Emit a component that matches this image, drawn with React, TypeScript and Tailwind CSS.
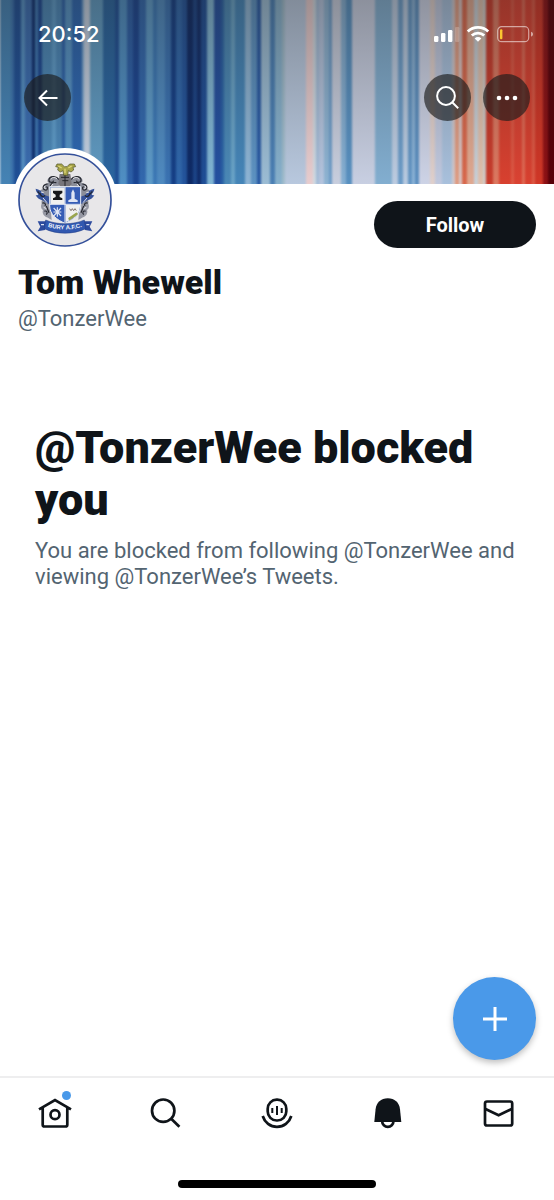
import React from "react";

// [left edge, colour], each stripe runs up to the next one
const STRIPES: [number, string][] = [
  [0, "#4583b5"], [11, "#3a72ae"], [14, "#1f4f96"], [21, "#5590c4"], [25, "#3a6cb0"], [32, "#0c2c6c"],
  [35, "#3f7ab5"], [38, "#1b4690"], [42, "#4a86b6"], [52, "#5e9bc8"], [56, "#4a86b8"], [62, "#2a5fa8"],
  [65, "#5592c4"], [72, "#2d66b0"], [82, "#7ba8d0"], [84, "#c3cfe0"], [90, "#5f9ac2"], [103, "#2a65a0"],
  [115, "#1f4f95"], [119, "#4f8fc4"], [127, "#2c5fa8"], [133, "#1b4592"], [139, "#3268ae"], [146, "#5d9ac8"],
  [153, "#3b78b6"], [157, "#4f8ac0"], [165, "#3a72b2"], [171, "#153f86"], [176, "#2f66aa"], [182, "#23549c"],
  [187, "#0e2a66"], [193, "#1b4488"], [197, "#102c6a"], [201, "#1f4e96"], [207, "#80b5d4"], [214, "#2450a0"],
  [221, "#2a62a6"], [224, "#4a88b6"], [231, "#6aa4c8"], [235, "#4585b8"], [245, "#8db4d4"], [251, "#5c92c2"],
  [257, "#2a5aa4"], [261, "#9bbcd4"], [270, "#4a7fb4"], [275, "#86b0cc"], [282, "#a0bccc"], [285, "#b8c8de"],
  [306, "#e8ccce"], [313, "#d0dae2"], [316, "#a4bcd8"], [319, "#b4c4de"], [324, "#8db3d2"], [329, "#6d9cc8"],
  [332, "#c8cede"], [341, "#84aed2"], [346, "#5890c0"], [352, "#c8cfe2"], [375, "#82aed0"], [392, "#bccbe0"],
  [398, "#6c9cc8"], [403, "#b8cae0"], [408, "#6496c4"], [412, "#8cb4d8"], [415, "#5c8fc0"], [419, "#cdd3e6"],
  [430, "#e0d0cc"], [435, "#c0c8de"], [442, "#a8c0dc"], [452, "#d0c8cc"], [455, "#e09a80"], [459, "#d8c8c8"],
  [462, "#d8684c"], [467, "#e0a890"], [474, "#c8d0d8"], [478, "#e0c0ac"], [483, "#d0ccc8"], [486, "#c83c2c"],
  [493, "#dc7860"], [499, "#d8402f"], [511, "#de5844"], [514, "#da4232"], [522, "#e06a54"], [525, "#d8402f"],
  [532, "#dd5a46"], [535, "#d03626"], [543, "#8c1014"], [548, "#580008"],
];

function Banner() {
  return (
    <svg viewBox="0 0 554 184" preserveAspectRatio="none" className="absolute inset-0 h-full w-full" aria-hidden="true">
      <defs>
        <linearGradient id="shade" x1="0" y1="0" x2="0" y2="1">
          <stop offset="0" stopColor="#222" stopOpacity="0.36" />
          <stop offset="1" stopColor="#222" stopOpacity="0" />
        </linearGradient>
        <filter id="soften" x="0" y="0" width="1" height="1" colorInterpolationFilters="sRGB">
          <feGaussianBlur stdDeviation="0.9 0" />
        </filter>
      </defs>
      <g filter="url(#soften)">
        {STRIPES.map(([x, color], i) => (
          <rect key={x} x={x} y="0" width={(STRIPES[i + 1]?.[0] ?? 556) - x + 0.5} height="184" fill={color} />
        ))}
      </g>
      <rect width="554" height="184" fill="url(#shade)" />
    </svg>
  );
}

function StatusIcons() {
  return (
    <svg viewBox="0 0 100 18" className="h-[18px] w-[100px]" aria-hidden="true">
      <g fill="#fff">
        <rect x="0" y="11" width="4.4" height="6" rx="1.2" />
        <rect x="7" y="8" width="4.4" height="9" rx="1.2" />
        <rect x="14" y="5" width="4.4" height="12" rx="1.2" />
        <rect x="21" y="2" width="4.4" height="15" rx="1.2" opacity="0.2" />
        <path d="M44 16.8l-3.3-3.4a4.7 4.7 0 0 1 6.6 0z" />
      </g>
      <g fill="none" stroke="#fff" strokeWidth="2.8">
        <path d="M37.8 10.6a8.9 8.9 0 0 1 12.4 0" />
        <path d="M33.8 6.4a14.8 14.8 0 0 1 20.4 0" />
      </g>
      <rect x="63.7" y="1.7" width="31" height="15" rx="4" fill="none" stroke="#fff" strokeOpacity="0.55" strokeWidth="1.2" />
      <rect x="66" y="4.2" width="2.4" height="10" rx="1" fill="#fbc531" />
      <path d="M97 6.8v4.8c1.6-.6 2-1.5 2-2.4s-.4-1.8-2-2.4z" fill="#fff" fillOpacity="0.55" />
    </svg>
  );
}

function Crest() {
  const half = (
    <g>
      <path d="M152 112c-8-14-22-22-34-14-10 6-8 18 2 18-14-4-22 6-18 16-12 0-20 12-14 22 6 8 14 4 16 0-12 10-14 24-4 30 8 4 12 2 18-4l0-50 34-8z" fill="#8b8e99" />
      <path d="M76 132c10 2 20 8 28 20l14 4v34c-8-4-14-14-18-22-12-2-20-8-24-16 6 0 8-2 8-4-4-4-8-10-8-16z" fill="#35529a" />
      <path d="M100 170c-10 8-10 22-2 26-4 10 4 20 12 22l14 8-4-46z" fill="#9698a3" />
      <g fill="none" stroke="#25272f" strokeWidth="3.5">
        <path d="M148 106c-10-12-28-14-32-2-2 10 12 12 14 4M112 118c-14 0-18 14-8 18 8 2 10-8 4-10M138 114c-8-2-16 2-18 10M90 146c0 10 10 12 14 6M96 176c6-4 12 2 8 8M102 200c6-4 12 4 6 10M82 140l10 12M108 184l8 20" />
      </g>
      <g fill="none" stroke="#e9e9ed" strokeWidth="3">
        <path d="M140 102c-8-6-16-4-18 2M104 124c-4 4-2 8 2 8M128 118l-10 12M98 160l12 14M100 188l8 4M92 142l8 2" />
      </g>
    </g>
  );
  return (
    <svg viewBox="20 22 288 288" className="h-24 w-24" role="img" aria-label="Bury A.F.C. crest">
      <circle cx="164" cy="166" r="138" fill="#e8e7e9" stroke="#34509a" strokeWidth="5" />
      {half}
      <g transform="translate(328 0) scale(-1 1)">{half}</g>
      <path d="M148 88h32l4 30-10 12h-20l-10-12z" fill="#77757b" />
      <path d="M152 98l24 0M156 108h18M164 88v38" stroke="#24242a" strokeWidth="3" />
      <g fill="#a8a54a" stroke="#4c4e28" strokeWidth="2">
        <path d="M160 92l-2-14-8 4-8-6 2-8-8-2 4-8 14 0 8 8h8l8-8 14 0 4 8-8 2 2 8-8 6-8-4-2 14z" />
      </g>
      <path d="M144 64l10 6M184 64l-10 6M164 72v14" stroke="#ded77a" strokeWidth="4" />
      <path d="M118 126h93v58c0 26-24 42-47 52-23-10-46-26-46-52z" fill="#365db5" stroke="#e9ecf3" strokeWidth="3" />
      <path d="M120 128h43v50h-43z" fill="#f0f0ef" />
      <path d="M166 181h43v4c0 24-22 38-43 48z" fill="#f0f0ef" />
      <path d="M164 127v107M119 179h92" stroke="#e9ecf3" strokeWidth="3" />
      <path d="M128 138h28v7l-8 5v7l8 4v5h-28v-5l8-4v-7l-8-5z" fill="#17181b" />
      <path d="M188 134l5 10v18l9 5v5h-28v-5l9-5v-18z" fill="#dfe5f4" />
      <path d="M130 190l22 24M152 190l-22 24M141 188v28M129 202h24" stroke="#dfe5f4" strokeWidth="3.5" />
      <path d="M178 192l4 6 4-6 4 6 4-6 4 6" fill="none" stroke="#6d5b56" strokeWidth="2.5" />
      <path d="M178 222l20-14" stroke="#9aa54e" strokeWidth="8" strokeLinecap="round" />
      <path d="M82 230l26 0-4 26-22 4 8-14zM246 230l-26 0 4 26 22 4-8-14z" fill="#2d4b9e" />
      <path d="M106 226c34 15 82 15 116 0l4 26c-36 18-88 18-124 0z" fill="#3158b0" stroke="#203a80" strokeWidth="1.5" />
      <path d="M92 240h9M228 240h9" stroke="#dfe5f4" strokeWidth="4" />
      <path id="motto" d="M106 244c34 14 82 14 116 0" fill="none" />
      <text fontFamily="Liberation Sans, sans-serif" fontSize="18" fontWeight="700" fill="#f2f4fa" textAnchor="middle">
        <textPath href="#motto" startOffset="50%">BURY A.F.C.</textPath>
      </text>
    </svg>
  );
}

const roundButton = "flex h-[47px] w-[47px] items-center justify-center rounded-full bg-[#1b1b1b]/65";

function NavItem({ label, dot, children }: { label: string; dot?: boolean; children: React.ReactNode }) {
  return (
    <a href="#" aria-label={label} className="flex justify-center">
      <span className="relative">
        <svg viewBox="0 0 36 36" className="h-9 w-9" fill="none" stroke="#0f1419" strokeWidth="2.7">
          {children}
        </svg>
        {dot && <span className="absolute -top-1 right-0.5 h-[9px] w-[9px] rounded-full bg-[#4a99e9]" />}
      </span>
    </a>
  );
}

export default function App() {
  return (
    <div className="flex min-h-screen flex-col bg-white font-['Roboto',sans-serif] text-[#0f1419]">
      <header className="relative h-[184px]">
        <Banner />
        <div className="relative flex items-center justify-between pt-5 pr-5 pl-[38px]">
          <time className="font-['Inter',sans-serif] text-[22px] leading-7 font-medium text-white">20:52</time>
          <StatusIcons />
        </div>
        <div className="relative flex items-center gap-3 px-6 pt-[26px]">
          <button type="button" aria-label="Back" className={roundButton}>
            <svg viewBox="0 0 24 24" className="h-6 w-6" fill="none" stroke="#fff" strokeWidth="2">
              <path d="M21.5 12H3.5M11 4.5L3.5 12l7.5 7.5" />
            </svg>
          </button>
          <button type="button" aria-label="Search" className={`${roundButton} ml-auto`}>
            <svg viewBox="0 0 24 24" className="h-6 w-6" fill="none" stroke="#fff" strokeWidth="2">
              <circle cx="10" cy="10" r="8.9" />
              <path d="M16.2 16.2l6 6" />
            </svg>
          </button>
          <button type="button" aria-label="More" className={roundButton}>
            <svg viewBox="0 0 24 24" className="h-6 w-6" fill="#fff">
              <circle cx="4" cy="12" r="2.3" />
              <circle cx="12" cy="12" r="2.3" />
              <circle cx="20" cy="12" r="2.3" />
            </svg>
          </button>
        </div>
      </header>

      <main className="flex-1">
        <section className="px-[18px]">
          <div className="flex items-start justify-between">
            <div className="relative -mt-9 -ml-[5px] rounded-full bg-white p-1">
              <Crest />
            </div>
            <button type="button" className="mt-[17px] h-[47px] w-[162px] rounded-full bg-[#0f1419] text-xl font-bold text-white">
              Follow
            </button>
          </div>
          <h1 className="mt-2.5 text-[34px] leading-10 font-black">Tom Whewell</h1>
          <p className="mt-1 text-[22px] leading-[26px] text-[#536471]">@TonzerWee</p>
        </section>

        <section className="px-[35px] pt-[90px]">
          <h2 className="text-[45px] leading-[52px] font-black">@TonzerWee blocked you</h2>
          <p className="mt-3 text-[22px] leading-[26px] text-[#536471]">
            You are blocked from following @TonzerWee and viewing @TonzerWee’s Tweets.
          </p>
        </section>
      </main>

      <div className="sticky bottom-[140px] mr-[18px] mb-4 self-end">
        <button
          type="button"
          aria-label="New Tweet"
          className="flex h-[83px] w-[83px] items-center justify-center rounded-full bg-[#4a99e9] shadow-[0_3px_6px_rgba(0,0,0,0.25)]"
        >
          <svg viewBox="0 0 24 24" className="h-6 w-6" stroke="#fff" strokeWidth="3">
            <path d="M12 0v24M0 12h24" />
          </svg>
        </button>
      </div>

      <footer className="border-t-2 border-[#eeeeef] bg-white pt-[17px] pb-3">
        <nav className="grid grid-cols-5">
          <NavItem label="Home" dot>
            <path d="M2 14.4L18 5l16 9.4M5.7 12.5v17.2a1.8 1.8 0 0 0 1.8 1.8h21a1.8 1.8 0 0 0 1.8-1.8V12.5" />
            <circle cx="18" cy="19.7" r="4.5" />
          </NavItem>
          <NavItem label="Search">
            <circle cx="15.2" cy="15.7" r="11.2" />
            <path d="M23.2 23.7l8.2 8.1" />
          </NavItem>
          <NavItem label="Spaces">
            <rect x="8.7" y="4.7" width="18.6" height="20.8" rx="9" />
            <path d="M3.7 21c2 6.6 7.6 10.8 14.3 10.8S30.3 27.6 32.3 21" />
            <path d="M13.3 13v5M18 11v9M22.7 13v5" strokeWidth="2" />
          </NavItem>
          <NavItem label="Notifications">
            <path d="M4.3 27L5.6 14.2C6.3 7.6 11 3.3 17.8 3.3s11.5 4.3 12.2 10.9L31.3 27z" fill="#0f1419" stroke="none" />
            <path d="M12.2 26.5a5.6 5.4 0 0 0 11.2 0" />
          </NavItem>
          <NavItem label="Messages">
            <rect x="4" y="6.5" width="27.2" height="24" rx="2" />
            <path d="M4 13.7l13.6 6.5 13.6-6.5" />
          </NavItem>
        </nav>
        <div className="mx-auto mt-[49px] h-2 w-[198px] rounded-full bg-black" />
      </footer>
    </div>
  );
}
